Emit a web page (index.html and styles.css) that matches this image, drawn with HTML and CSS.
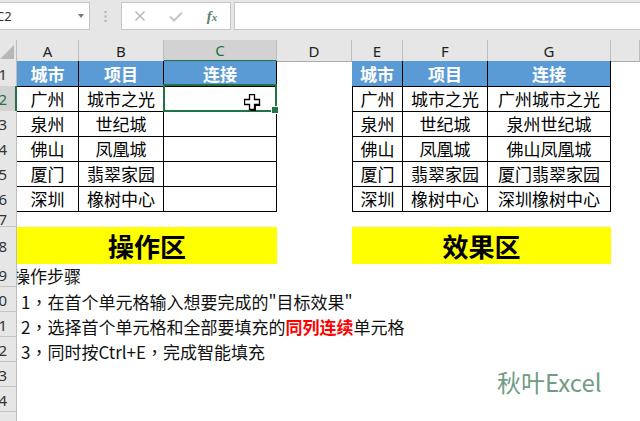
FILE: index.html
```html
<!DOCTYPE html>
<html lang="zh-CN">
<head>
<meta charset="utf-8">
<title>Ctrl+E 智能填充</title>
<link rel="stylesheet" href="styles.css">
</head>
<body>
<div class="toolbar">
  <div class="namebox"><span class="nametext">C2</span><span class="caret"></span></div>
  <div class="dots"><svg width="3" height="11" viewBox="0 0 3 11"><rect x="0.5" y="0" width="2" height="2" fill="#b0b0b0"/><rect x="0.5" y="4.5" width="2" height="2" fill="#b0b0b0"/><rect x="0.5" y="9" width="2" height="2" fill="#b0b0b0"/></svg></div>
  <div class="fbtns">
    <div class="fbtn"><svg width="12" height="12" viewBox="0 0 12 12"><path d="M1.5 1.5 L10.5 10.5 M10.5 1.5 L1.5 10.5" stroke="#b4b4b4" stroke-width="1.4" fill="none"/></svg></div>
    <div class="fbtn"><svg width="14" height="11" viewBox="0 0 14 11"><path d="M1 5.5 L5 9.5 L13 1.5" stroke="#c6c6c6" stroke-width="2" fill="none"/></svg></div>
    <div class="fbtn"><span class="fx">f<span class="fxx">x</span></span></div>
  </div>
  <div class="formula"></div>
</div>

<div class="sheet">
  <div class="row colhdr">
    <div class="corner"><svg width="14" height="14" viewBox="0 0 14 14"><polygon points="14,0 14,14 0,14" fill="#b7b7b7"/></svg></div>
    <div class="ch">A</div><div class="ch">B</div><div class="ch on">C</div><div class="ch">D</div><div class="ch">E</div><div class="ch">F</div><div class="ch">G</div><div class="ch"></div>
  </div>

  <div class="row">
    <div class="rh">1</div>
    <div class="c hd">城市</div><div class="c hd">项目</div><div class="c hd">连接</div><div></div>
    <div class="c hd">城市</div><div class="c hd">项目</div><div class="c hd">连接</div><div></div>
  </div>
  <div class="row">
    <div class="rh on">2</div>
    <div class="c">广州</div><div class="c">城市之光</div>
    <div class="c sel"><svg class="cursor" width="17" height="17" viewBox="0 0 17 17"><polygon points="5.5,0.5 10.5,0.5 10.5,5.5 15.5,5.5 15.5,10.5 10.5,10.5 10.5,15.5 5.5,15.5 5.5,10.5 0.5,10.5 0.5,5.5 5.5,5.5" fill="#fff" stroke="#000" stroke-width="1.3"/><path d="M6.5 16.3 H11.3 V11.3 H16.3" stroke="#000" stroke-width="1.3" fill="none"/></svg></div>
    <div></div>
    <div class="c lb">广州</div><div class="c">城市之光</div><div class="c">广州城市之光</div><div></div>
  </div>
  <div class="row">
    <div class="rh">3</div>
    <div class="c">泉州</div><div class="c">世纪城</div><div class="c"></div><div></div>
    <div class="c lb">泉州</div><div class="c">世纪城</div><div class="c">泉州世纪城</div><div></div>
  </div>
  <div class="row">
    <div class="rh">4</div>
    <div class="c">佛山</div><div class="c">凤凰城</div><div class="c"></div><div></div>
    <div class="c lb">佛山</div><div class="c">凤凰城</div><div class="c">佛山凤凰城</div><div></div>
  </div>
  <div class="row">
    <div class="rh">5</div>
    <div class="c">厦门</div><div class="c">翡翠家园</div><div class="c"></div><div></div>
    <div class="c lb">厦门</div><div class="c">翡翠家园</div><div class="c">厦门翡翠家园</div><div></div>
  </div>
  <div class="row">
    <div class="rh">6</div>
    <div class="c">深圳</div><div class="c">橡树中心</div><div class="c"></div><div></div>
    <div class="c lb">深圳</div><div class="c">橡树中心</div><div class="c">深圳橡树中心</div><div></div>
  </div>
  <div class="row r7">
    <div class="rh">7</div>
  </div>
  <div class="row r8">
    <div class="rh">8</div>
    <div class="band">操作区</div><div></div><div class="band">效果区</div>
  </div>
  <div class="row">
    <div class="rh">9</div>
    <div class="note first">操作步骤</div>
  </div>
  <div class="row">
    <div class="rh">10</div>
    <div class="note">1<span class="cm">，</span>在首个单元格输入想要完成的"目标效果"</div>
  </div>
  <div class="row">
    <div class="rh">11</div>
    <div class="note">2<span class="cm">，</span>选择首个单元格和全部要填充的<b class="red">同列连续</b>单元格</div>
  </div>
  <div class="row">
    <div class="rh">12</div>
    <div class="note">3<span class="cm">，</span>同时按Ctrl+E<span class="cm">，</span>完成智能填充</div>
  </div>
  <div class="row"><div class="rh">13</div></div>
  <div class="row"><div class="rh">14</div></div>
  <div class="row"><div class="rh">15</div></div>
</div>

<div class="wm">秋叶Excel</div>
</body>
</html>
```

FILE: styles.css
```css
* { box-sizing: border-box; }
html, body { margin: 0; padding: 0; }
body {
  width: 640px;
  height: 421px;
  overflow: hidden;
  background: #fff;
  font-family: "Noto Sans CJK SC", "Noto Sans", sans-serif;
}

/* formula bar */
.toolbar {
  display: flex;
  align-items: flex-start;
  height: 40px;
  padding-top: 2px;
  background: #e6e6e6;
}
.namebox {
  width: 98px;
  height: 28px;
  margin-left: -8px;
  padding: 0 5px 0 3px;
  display: flex;
  align-items: center;
  justify-content: space-between;
  background: #fff;
  border: 1px solid #c6c6c6;
  font: 13px "Noto Sans", sans-serif;
  color: #333;
}
.caret {
  width: 0; height: 0;
  border-left: 3.5px solid transparent;
  border-right: 3.5px solid transparent;
  border-top: 4px solid #777;
}
.dots {
  width: 31px;
  height: 28px;
  display: flex;
  align-items: center;
  justify-content: center;
}
.fbtns {
  width: 110px;
  height: 28px;
  display: flex;
  background: #fff;
  border: 1px solid #c6c6c6;
}
.fbtn {
  width: 36px;
  display: flex;
  align-items: center;
  justify-content: center;
}
.fx {
  font: italic 15px "Liberation Serif", serif;
  color: #5f806c;
  font-weight: bold;
}
.fxx { font-size: 11px; }
.formula {
  flex: 1;
  height: 28px;
  margin-left: 3px;
  margin-right: -4px;
  background: #fff;
  border: 1px solid #c6c6c6;
}

/* sheet grid */
.row {
  display: grid;
  grid-template-columns: 17px 62px 85px 113px 75px 51px 85px 123px 1fr;
  height: 25px;
}
.colhdr { height: 21px; background: #e6e6e6; }
.r7 { height: 16px; }
.r8 { height: 35px; }

.corner {
  display: flex;
  align-items: flex-end;
  justify-content: flex-end;
  padding: 0 2px 2px 0;
  border-right: 1px solid #bdbdbd;
  border-bottom: 1px solid #ababab;
  overflow: hidden;
}
.ch {
  display: flex;
  align-items: center;
  justify-content: center;
  border-right: 1px solid #bdbdbd;
  border-bottom: 1px solid #ababab;
  font: 15px "Noto Sans", sans-serif;
  color: #222;
}
.ch.on {
  background: #d2d2d2;
  color: #217346;
  border-bottom: 2px solid #217346;
}
.rh {
  display: flex;
  align-items: center;
  justify-content: flex-end;
  padding: 1px 9px 0 0;
  overflow: hidden;
  white-space: nowrap;
  background: #e6e6e6;
  border-right: 1px solid #bdbdbd;
  border-bottom: 1px solid #c4c4c4;
  font: 15px "Noto Sans", sans-serif;
  color: #333;
}
.rh.on {
  background: #d2d2d2;
  color: #217346;
  border-right: 2px solid #217346;
  padding-right: 8px;
}

/* data tables */
.c {
  display: flex;
  align-items: center;
  justify-content: center;
  white-space: nowrap;
  border-right: 1px solid #000;
  border-bottom: 1px solid #000;
  font-size: 17px;
  color: #000;
}
.c.lb { border-left: 1px solid #000; }
.hd {
  background: #5b9bd5;
  color: #fff;
  font-weight: bold;
}
.sel { position: relative; }
.sel::after {
  content: "";
  position: absolute;
  left: -1px; top: -2px; right: -1px; bottom: -1px;
  border: 2px solid #217346;
}
.sel::before {
  content: "";
  position: absolute;
  right: -3px; bottom: -3px;
  width: 6px; height: 6px;
  background: #217346;
  border: 1px solid #fff;
  z-index: 2;
}
.cursor {
  position: absolute;
  left: 80px;
  top: 8px;
  z-index: 3;
}

/* bands and notes */
.band {
  grid-column: span 3;
  display: flex;
  align-items: center;
  justify-content: center;
  background: #ffff00;
  font-size: 26px;
  font-weight: bold;
  color: #000;
}
.note {
  grid-column: 2 / -1;
  display: flex;
  align-items: center;
  padding: 4px 0 0 4px;
  overflow: hidden;
  white-space: nowrap;
  font-size: 17px;
  color: #111;
}
.note.first { display: block; padding: 1px 0 0 0; text-indent: -4px; }
.cm { font-family: "Noto Sans CJK TC", "Noto Sans CJK SC", sans-serif; }
.red { color: #ff0000; font-weight: bold; }

.wm {
  position: absolute;
  left: 497px;
  top: 365px;
  font-size: 24px;
  line-height: 34px;
  color: #6f9c84;
}
```
